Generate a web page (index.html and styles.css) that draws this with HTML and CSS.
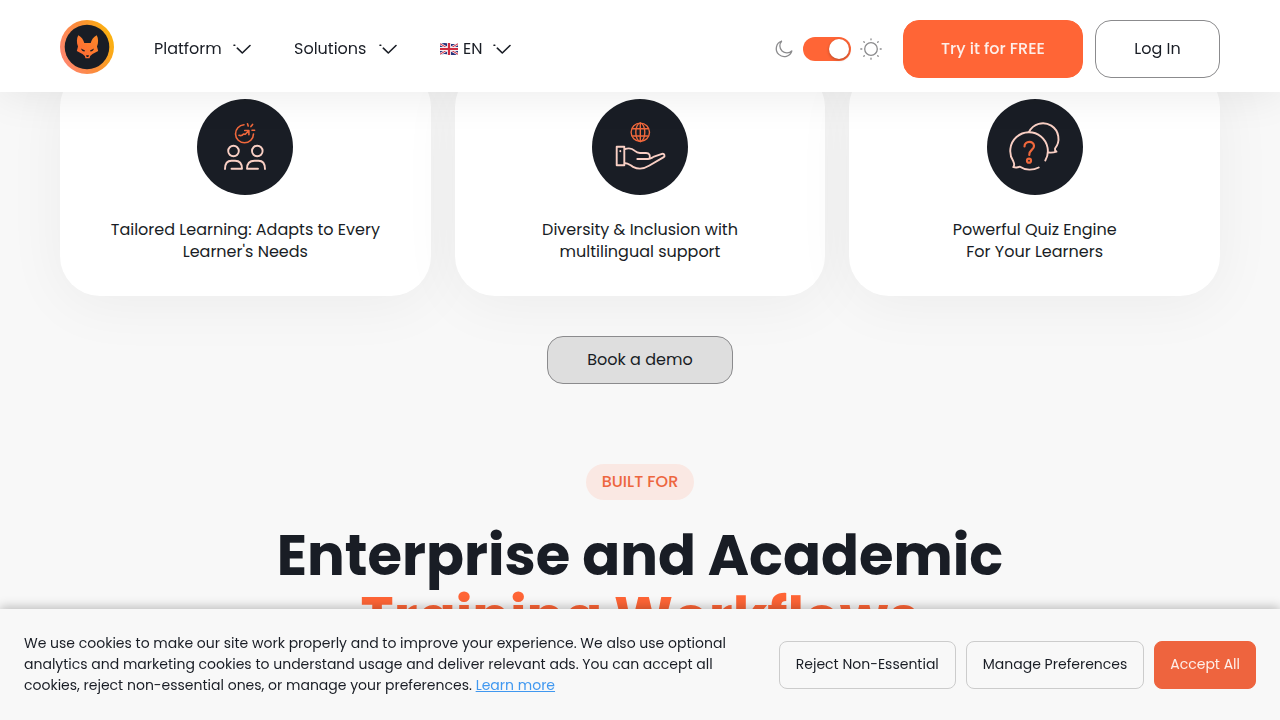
FILE: index.html
```html
<!DOCTYPE html>
<html lang="en">
<head>
    <meta charset="UTF-8">
    <meta name="viewport" content="width=device-width, initial-scale=1.0">
    <title>Enterprise and Academic Training</title>
    <link rel="stylesheet" href="styles.css">
</head>
<body>

    <!-- Header -->
    <header class="header">
        <a href="#" class="logo" aria-label="Home">
            <svg width="54" height="54" viewBox="0 0 54 54">
                <defs>
                    <linearGradient id="ring" x1="0" y1="0.7" x2="1" y2="0.3">
                        <stop offset="0" stop-color="#ff8672"/>
                        <stop offset="0.5" stop-color="#fb8c38"/>
                        <stop offset="1" stop-color="#fbb50c"/>
                    </linearGradient>
                    <linearGradient id="fox" x1="0" y1="1" x2="1" y2="0">
                        <stop offset="0" stop-color="#ff6536"/>
                        <stop offset="1" stop-color="#fb8a28"/>
                    </linearGradient>
                </defs>
                <circle cx="27" cy="27" r="27" fill="url(#ring)"/>
                <circle cx="27" cy="27" r="22.3" fill="#191d25"/>
                <path fill="url(#fox)" d="M18.300 15.300C16.500 18.500 16.500 23 18 26.500L16.800 31L22.500 34L24.800 36L25.500 38.300H29.500L30.200 36L32.500 34L38.200 31L37 26.500C38.500 23 38.500 18.500 36.700 15.300C33.500 17 31.500 20 30.700 23H24.300C23.500 20 21.500 17 18.300 15.300Z"/>
                <path fill="#191d25" d="M21 28.500L25 30.500L24.500 31.500C22.800 31.500 21.500 30.500 21 28.500ZM34 28.500L30 30.500L30.500 31.500C32.200 31.500 33.500 30.500 34 28.500ZM26 35.300H29L28.300 37H26.700Z"/>
            </svg>
        </a>

        <nav class="nav">
            <button class="nav-item nav-platform" type="button">
                <span>Platform</span>
                <svg class="chevron" width="18" height="12" viewBox="0 0 18 12"><path d="M1 2.300h.8M4.300 5.200L9.300 10 17 2.500"/></svg>
            </button>
            <button class="nav-item nav-solutions" type="button">
                <span>Solutions</span>
                <svg class="chevron" width="18" height="12" viewBox="0 0 18 12"><path d="M1 2.300h.8M4.300 5.200L9.300 10 17 2.500"/></svg>
            </button>
            <button class="nav-item nav-lang" type="button">
                <span class="lang">
                    <svg width="18" height="12" viewBox="0 0 18 12">
                        <path fill="#28347c" d="M0 .5q4.500-1 9 0t9 0v11q-4.500 1-9 0t-9 0z"/>
                        <path stroke="#f4eef2" stroke-width="2.400" d="M0 .8l18 10.400M18 .8L0 11.200"/>
                        <path stroke="#d02c40" stroke-width="1" d="M0 .8l18 10.400M18 .8L0 11.200"/>
                        <path stroke="#f4eef2" stroke-width="4" d="M9 0v12M0 6h18"/>
                        <path stroke="#d02c40" stroke-width="2.200" d="M9 0v12M0 6h18"/>
                    </svg>
                    EN
                </span>
                <svg class="chevron" width="18" height="12" viewBox="0 0 18 12"><path d="M1 2.300h.8M4.300 5.200L9.300 10 17 2.500"/></svg>
            </button>
        </nav>

        <div class="theme">
            <svg width="20" height="20" viewBox="0 0 20 20"><path d="M7.800 2A8 8 0 1 0 18 11.700 6.300 6.300 0 0 1 7.800 2z"/></svg>
            <input type="checkbox" class="switch" aria-label="Light theme" checked>
            <svg width="22" height="22" viewBox="0 0 22 22">
                <circle cx="11" cy="11" r="6.300"/>
                <path stroke-linecap="round" d="M11 .8v1M11 20.200v1M.8 11h1M20.200 11h1M3.800 3.800l.5.5M17.700 17.700l.5.5M3.800 18.200l.5-.5M17.700 4.300l.5-.5"/>
            </svg>
        </div>

        <div class="header-buttons">
            <a href="#" class="btn btn-primary">Try it for FREE</a>
            <a href="#" class="btn btn-login">Log In</a>
        </div>
    </header>

    <main class="main">
        <!-- Feature Cards -->
        <section class="cards">
            <article class="card">
                <svg class="card-icon" viewBox="0 0 96 96">
                    <g stroke="#f0683c" stroke-width="1.600">
                        <path d="M47 25.800A9 9 0 1 0 56.500 35"/>
                        <path d="M42 36.300C44 37 45.500 36.300 46.500 35L48.300 35.300L51.700 31.700M47.700 31.500H51.900V35.700"/>
                        <path d="M50.500 24.700L51.200 27M53.900 27.600L55.600 25.400M55 31.300H57.600"/>
                    </g>
                    <g stroke="#f9cfc4">
                        <circle cx="36.500" cy="52" r="5.300"/>
                        <circle cx="60.300" cy="52" r="5.300"/>
                        <path d="M28 70c0-6 2-8.300 6.500-8.300h3.500c5 0 7 3.300 7 8.100H34.500M68 70c0-6-2-8.300-6.500-8.300h-4c-5 0-7.500 3.300-7.500 8.100h11"/>
                    </g>
                </svg>
                <p>Tailored Learning: Adapts to Every<br>Learner's Needs</p>
            </article>
            <article class="card">
                <svg class="card-icon" viewBox="0 0 96 96">
                    <g stroke="#f0683c" stroke-width="1.400">
                        <circle cx="48.300" cy="33.300" r="9.200"/>
                        <ellipse cx="48.300" cy="33.300" rx="4.500" ry="9.200"/>
                        <path d="M48.300 24v18.500M40.500 29.700h15.600M40.500 37h15.600"/>
                    </g>
                    <g stroke="#f9cfc4">
                        <path d="M24.700 47.700h7.600v18.600h-7.600zM28.300 52v.3M32.300 50.300c4-1.500 8-.8 10.200 1.300 2 1.800 3 2.400 5.500 2.400h6c3.500 0 4.500 2.500 3.500 5.500M45.300 60H56c3-.2 4-1.500 6-2.300l8-2.800c2.500-.5 3.500 2.300 1.300 3.500L57 66.800c-6 3.700-10.500 3.900-16 1-3-1.600-4.500-3.800-8.700-3.800"/>
                    </g>
                </svg>
                <p>Diversity &amp; Inclusion with<br>multilingual support</p>
            </article>
            <article class="card">
                <svg class="card-icon" viewBox="0 0 96 96">
                    <g stroke="#f9cfc4">
                        <path d="M51.700 68.500C46 71.500 38.500 71.500 33 67.700C30.500 68.700 28.500 68.800 26.300 68.200C27.600 66.500 27.600 65 26.300 62.300A18.800 18.800 0 1 1 58.300 61.500"/>
                        <path d="M42 33A15.500 15.500 0 1 1 68 49.500C67.600 50.800 68.200 51.800 69.500 52.700C66.500 53.700 64 53.800 61.500 53.500"/>
                    </g>
                    <g stroke="#f0683c" stroke-width="2.200">
                        <path d="M37.500 47.500c0-6 9.500-6 9.500-.5 0 4-4.700 3.500-4.700 9"/>
                        <circle cx="42" cy="61.700" r="2"/>
                    </g>
                </svg>
                <p>Powerful Quiz Engine<br>For Your Learners</p>
            </article>
        </section>

        <a href="#" class="btn btn-demo">Book a demo</a>

        <!-- Built For -->
        <span class="pill">BUILT FOR</span>
        <h2 class="title">Enterprise and Academic<br><span>Training Workflows</span></h2>
    </main>

    <!-- Cookie Banner -->
    <div class="cookies">
        <p class="cookies-text">We use cookies to make our site work properly and to improve your experience. We also use optional<br>analytics and marketing cookies to understand usage and deliver relevant ads. You can accept all<br>cookies, reject non-essential ones, or manage your preferences. <a href="#">Learn more</a></p>
        <div class="cookies-buttons">
            <button class="cookie-btn" type="button">Reject Non-Essential</button>
            <button class="cookie-btn" type="button">Manage Preferences</button>
            <button class="cookie-btn cookie-accept" type="button">Accept All</button>
        </div>
    </div>

</body>
</html>
```
FILE: styles.css
```css
* {
    box-sizing: border-box;
}

body {
    margin: 0;
    background-color: #f8f8f8;
    color: #191d25;
    font-family: Poppins, Inter, sans-serif;
    font-size: 16px;
    line-height: 22px;
}

button {
    font-family: inherit;
    color: inherit;
    cursor: pointer;
}

/* Header */
.header {
    position: fixed;
    top: 0;
    left: 0;
    right: 0;
    z-index: 10;
    display: flex;
    align-items: center;
    padding: 20px 60px 14px;
    background-color: #fff;
    box-shadow: 0 4px 40px rgba(0, 0, 0, 0.08);
}

.logo {
    align-self: flex-start;
    height: 54px;
    margin-right: 40px;
}

.nav {
    display: flex;
    gap: 43px;
}

.nav-item {
    display: flex;
    align-items: center;
    justify-content: space-between;
    padding: 0;
    border: none;
    background: none;
    font-size: 16px;
    line-height: 22px;
}

.nav-platform {
    width: 97px;
}

.nav-solutions {
    width: 103px;
}

.nav-lang {
    width: 71px;
}

.lang {
    display: flex;
    align-items: center;
    gap: 5px;
}

.chevron {
    fill: none;
    stroke: #191d25;
    stroke-width: 1.6;
    stroke-linecap: round;
    stroke-linejoin: round;
}

.theme {
    display: flex;
    align-items: center;
    gap: 9px;
    margin-left: auto;
    margin-right: 21px;
}

.theme svg {
    fill: none;
    stroke: #8b8b8d;
    stroke-width: 1.3;
}

.switch {
    appearance: none;
    width: 48px;
    height: 24px;
    margin: 0;
    padding: 2px;
    border-radius: 12px;
    background-color: #ff6536;
    cursor: pointer;
}

.switch::before {
    content: "";
    display: block;
    width: 20px;
    height: 20px;
    border-radius: 50%;
    background-color: #fff;
    box-shadow: 0 1px 3px rgba(0, 0, 0, 0.3);
}

.switch:checked::before {
    margin-left: auto;
}

.header-buttons {
    display: flex;
    gap: 12px;
}

.btn {
    display: flex;
    align-items: center;
    justify-content: center;
    height: 58px;
    border: 1px solid #8b8b8d;
    border-radius: 16px;
    color: #191d25;
    text-decoration: none;
}

.btn-primary {
    width: 180px;
    border-color: #ff6536;
    background-color: #ff6536;
    color: #fdeee9;
    font-weight: 500;
}

.btn-login {
    width: 125px;
}

/* Main */
.main {
    display: flex;
    flex-direction: column;
    align-items: center;
    padding: 67px 60px 0;
}

.cards {
    display: grid;
    grid-template-columns: repeat(3, 1fr);
    gap: 24px;
    width: 100%;
}

.card {
    padding: 32px 32px 33px;
    border-radius: 40px;
    background-color: #fff;
    box-shadow: 0 8px 60px rgba(0, 0, 0, 0.05);
    text-align: center;
}

.card-icon {
    display: block;
    width: 96px;
    height: 96px;
    margin: 0 auto 24px;
    border-radius: 50%;
    background-color: #191d25;
    fill: none;
    stroke-width: 1.9;
    stroke-linecap: round;
    stroke-linejoin: round;
}

.card p {
    margin: 0;
}

.btn-demo {
    z-index: 1;
    width: 186px;
    height: 48px;
    margin-top: 40px;
    background-color: #dedede;
}

.pill {
    margin-top: 80px;
    padding: 7px 16px;
    border-radius: 18px;
    background-color: #fae8e3;
    color: #ed663f;
    font-weight: 500;
}

.title {
    margin: 25px 0 0;
    font-size: 56px;
    font-weight: 700;
    line-height: 62px;
    text-align: center;
}

.title span {
    color: #ff6536;
}

/* Cookie Banner */
.cookies {
    position: fixed;
    bottom: 0;
    left: 0;
    right: 0;
    z-index: 20;
    display: flex;
    align-items: center;
    justify-content: space-between;
    padding: 24px;
    background-color: #f8f8f8;
    box-shadow: 0 -2px 10px rgba(0, 0, 0, 0.25);
    font-size: 14px;
    line-height: 21px;
}

.cookies-text {
    margin: 0;
}

.cookies-text a {
    color: #4098f0;
}

.cookies-buttons {
    display: flex;
    flex-shrink: 0;
    gap: 10px;
}

.cookie-btn {
    height: 48px;
    padding: 0 16px;
    border: 1px solid #ccc;
    border-radius: 8px;
    background: none;
    font-size: 14px;
}

.cookie-accept {
    padding: 0 15px;
    border-color: #ee643e;
    background-color: #ee643e;
    color: #fdeee9;
}
```
